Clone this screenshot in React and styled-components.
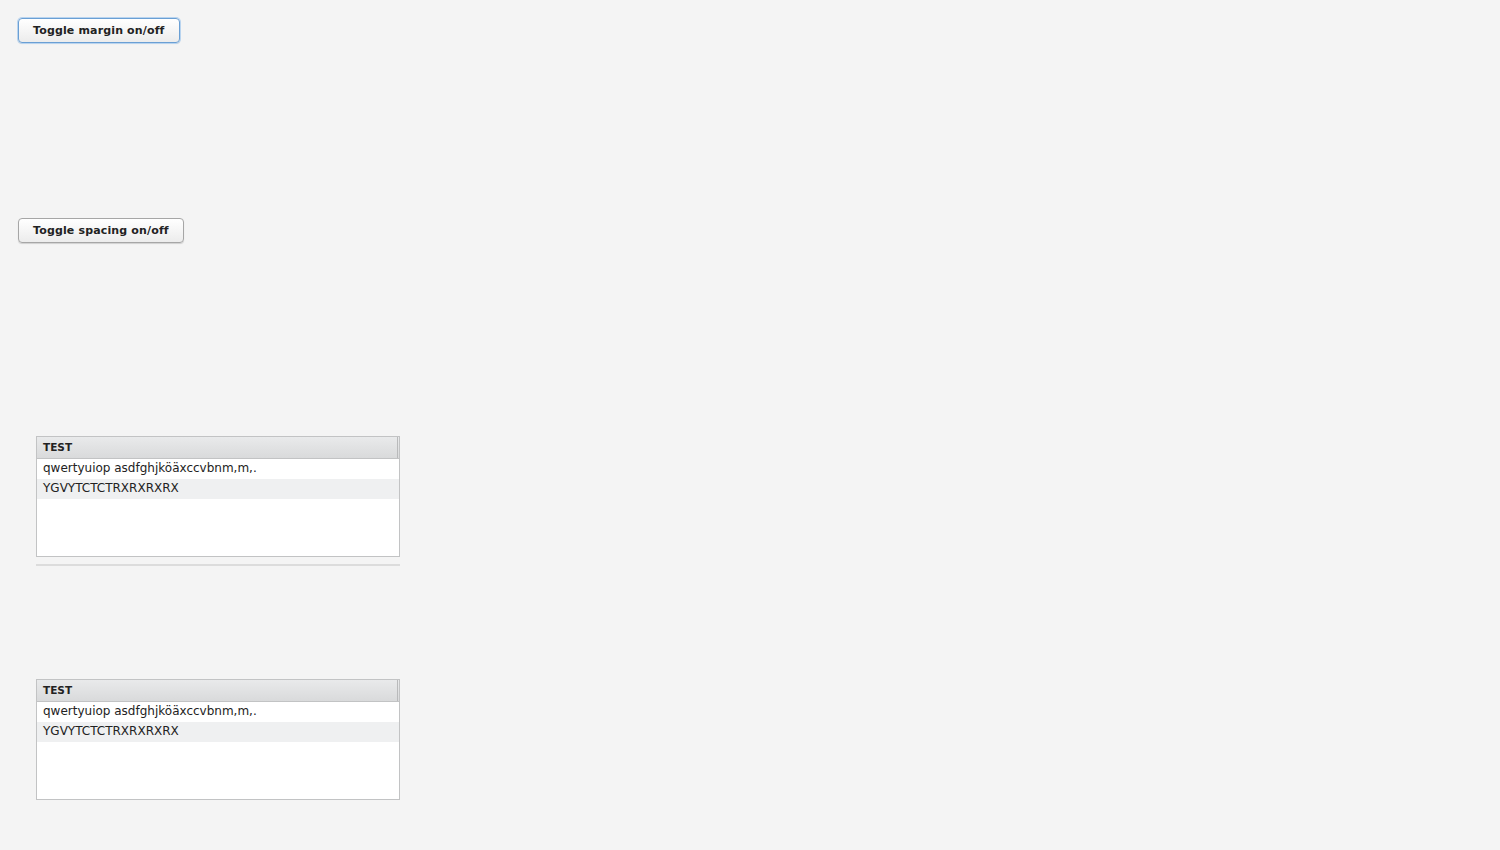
import React from 'react';
import styled, { createGlobalStyle } from 'styled-components';

const GlobalStyle = createGlobalStyle`
    html, body {
        margin: 0;
        padding: 0;
        background: #f4f4f4;
        font-family: "DejaVu Sans", sans-serif;
        color: #222;
    }
`;

const Page = styled.div`
    display: flex;
    flex-direction: column;
    align-items: flex-start;
    padding: 18px;
    height: 850px;
    box-sizing: border-box;
`;

const Button = styled.button`
    font-family: "DejaVu Sans", sans-serif;
    font-size: 11px;
    font-weight: bold;
    letter-spacing: 0.15px;
    color: #222;
    height: 25px;
    padding: 0 14px;
    border-radius: 4px;
    border: 1px solid ${props => (props.focused ? '#6a9fd4' : '#a6a6a6')};
    background: linear-gradient(#ffffff, #ececec);
    box-shadow: ${props => (props.focused ? '0 0 0 1px #b9d4ef, 0 1px 1px rgba(0,0,0,0.15)' : '0 1px 1px rgba(0,0,0,0.15)')};
    cursor: pointer;
    margin-bottom: ${props => props.gap}px;
    :focus {
        outline: none;
    }
`;

const Section = styled.div`
    margin-left: 18px;
    width: 364px;
`;

const Table = styled.div`
    width: 364px;
    height: 121px;
    box-sizing: border-box;
    border: 1px solid #c2c3c4;
    background: #fff;
    font-size: 12px;
`;

const Header = styled.div`
    display: flex;
    align-items: center;
    height: 21px;
    border-bottom: 1px solid #c2c3c4;
    background: linear-gradient(#e9eaeb, #d9dadb);
    .caption {
        flex: 1;
        padding: 0 0 2px 6px;
        font-size: 10.5px;
        font-weight: bold;
        color: #222;
    }
    .handle {
        width: 1px;
        height: 100%;
        background: #b9babb;
        margin-right: 1px;
    }
`;

const Row = styled.div`
    height: 20px;
    line-height: 18px;
    padding-left: 6px;
    color: #222;
    background: ${props => (props.odd ? '#eff0f1' : '#fff')};
`;

const Separator = styled.div`
    width: 364px;
    height: 2px;
    background: #dcdcdc;
    margin: 7px 0 113px;
`;

const rows = ['qwertyuiop asdfghjköäxccvbnm,m,.', 'YGVYTCTCTRXRXRXRX'];

const TestTable = () => (
    <Table>
        <Header>
            <div className="caption">TEST</div>
            <div className="handle" />
        </Header>
        {rows.map((r, i) => <Row key={r} odd={i % 2 === 1}>{r}</Row>)}
    </Table>
);

const App = () => (
    <>
        <GlobalStyle />
        <Page>
            <Button type="button" focused gap={175}>Toggle margin on/off</Button>
            <Button type="button" gap={193}>Toggle spacing on/off</Button>
            <Section>
                <TestTable />
                <Separator />
                <TestTable />
            </Section>
        </Page>
    </>
);

export default App;
